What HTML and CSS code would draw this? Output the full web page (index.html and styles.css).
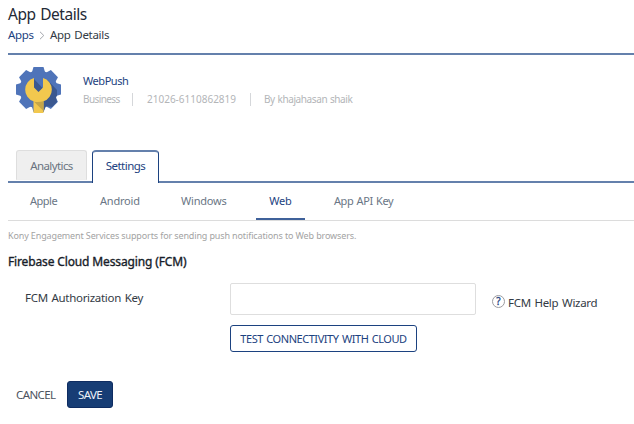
FILE: index.html
```html
<!DOCTYPE html>
<html lang="en">
<head>
<meta charset="utf-8">
<title>App Details</title>
<link rel="stylesheet" href="styles.css">
</head>
<body>
<header class="page-head">
  <h1>App Details</h1>
  <nav class="crumbs"><a class="crumb-link">Apps</a><svg class="chevron" viewBox="0 0 6 9"><path d="M1 .8 4.8 4.5 1 8.2"/></svg><span class="crumb-current">App Details</span></nav>
</header>
<section class="app">
  <svg class="app-icon" viewBox="0 0 45 46">
    <g fill="#4f74b9">
      <circle cx="22.500" cy="22.500" r="19"/>
      <path d="M17.500 0h10l1.500 5v35l-1.500 5h-10L16 40V5z"/>
      <path d="M17.500 0h10l1.500 5v35l-1.500 5h-10L16 40V5z" transform="rotate(45 22.500 22.500)"/>
      <path d="M17.500 0h10l1.500 5v35l-1.500 5h-10L16 40V5z" transform="rotate(90 22.500 22.500)"/>
      <path d="M17.500 0h10l1.500 5v35l-1.500 5h-10L16 40V5z" transform="rotate(135 22.500 22.500)"/>
    </g>
    <path fill="#3b5890" d="m18 12 9 9.500 4.500-8.500 9.500 10v6l-1 1 1 5-5 5-6-1-2.500 6-9.500-10z"/>
    <path fill="#f2c84e" d="M18 11v9.500l4.500 4.500 4.500-4.500V11a12.200 12.200 0 0 1 .5 23.300V46h-10V34.300A12.200 12.200 0 0 1 18 11z"/>
    <path fill="#c5a548" d="M18 34.700q4.500 1 9.500-.4V44z"/>
  </svg>
  <div class="app-info">
    <div class="app-name">WebPush</div>
    <div class="meta"><span class="meta-type">Business</span><span class="meta-id">21026-6110862819</span><span class="meta-owner">By khajahasan shaik</span></div>
  </div>
</section>
<nav class="tabs">
  <a class="tab tab-analytics"><span>Analytics</span></a>
  <a class="tab tab-active"><span>Settings</span></a>
</nav>
<nav class="subtabs">
  <a class="st-apple">Apple</a><a class="st-android">Android</a><a class="st-windows">Windows</a><a class="st-web">Web</a><a class="st-api">App API Key</a>
</nav>
<main>
  <p class="note">Kony Engagement Services supports for sending push notifications to Web browsers.</p>
  <h2>Firebase Cloud Messaging (FCM)</h2>
  <div class="form-row">
    <label class="key-label" for="key">FCM Authorization Key</label>
    <div class="field">
      <input id="key" type="text">
      <button class="test">TEST CONNECTIVITY WITH CLOUD</button>
    </div>
    <a class="help"><span class="help-mark">?</span><span class="help-text">FCM Help Wizard</span></a>
  </div>
  <div class="actions"><button class="cancel">CANCEL</button><button class="save">SAVE</button></div>
</main>
</body>
</html>
```
FILE: styles.css
```css
* { box-sizing: border-box; }
body {
  margin: 0;
  padding-left: 8px;
  height: 424px;
  overflow: hidden;
  background: #fff;
  color: #333b45;
  font: 11.5px/16px "Noto Sans", sans-serif;
  white-space: nowrap;
}
h1, h2, p { margin: 0; }
button, input { font: inherit; letter-spacing: inherit; word-spacing: inherit; padding: 0; margin: 0; }
.page-head { height: 55px; padding-top: 4px; border-bottom: 2px solid #6480ac; }
h1 { font-size: 15.5px; line-height: 21px; font-weight: 400; letter-spacing: -.45px; word-spacing: 1px; color: #242a36; }
.crumbs { display: flex; align-items: center; margin-top: 2px; letter-spacing: -.3px; word-spacing: 1px; }
.crumb-link { width: 31px; color: #1c4280; }
.chevron { width: 6px; height: 9px; margin-right: 5px; fill: none; stroke: #a2a5ab; stroke-width: 1; }
.app { display: flex; height: 95px; padding: 12px 0 0 8px; }
.app-icon { width: 45px; height: 46px; }
.app-info { margin-left: 22px; padding-top: 6px; }
.app-name { font-size: 11px; letter-spacing: -.45px; color: #1c4280; }
.meta { display: flex; align-items: center; margin-top: 4px; font-size: 10px; line-height: 13px; color: #b3b5b8; }
.meta-type { width: 49px; letter-spacing: -.6px; }
.meta-id { width: 118px; padding-left: 14px; border-left: 1px solid #d5d7da; }
.meta-owner { padding-left: 13px; border-left: 1px solid #d5d7da; letter-spacing: -.4px; word-spacing: .5px; }
.tabs { display: flex; height: 33px; padding-left: 8px; border-bottom: 2px solid #6480ac; font-size: 11.5px; letter-spacing: -.6px; }
.tab { text-align: center; }
.tab-analytics { width: 71px; height: 30px; padding-top: 7px; border: 1px solid #dedede; border-bottom-color: #eee; border-radius: 3px 3px 0 0; background: #efefef; color: #6a7380; }
.tab-active { width: 67px; height: 33px; margin-left: 5px; padding-top: 6px; border: 1px solid #1c4280; border-top: 2px solid #6480ac; border-bottom: 0; border-radius: 4px 4px 0 0; background: #fff; color: #1c4280; letter-spacing: -.55px; }
.subtabs { display: flex; height: 38px; border-bottom: 1px solid #dcdcdc; font-size: 11px; line-height: 16px; letter-spacing: -.2px; color: #6a7685; }
.subtabs a { padding-top: 10px; }
.st-apple { width: 70px; margin-left: 22px; }
.subtabs .st-apple { letter-spacing: -.5px; }
.subtabs .st-api { letter-spacing: -.45px; word-spacing: 1px; }
.st-android { width: 81px; }
.st-windows { width: 75px; }
.subtabs .st-web { width: 49px; margin-right: 29px; text-align: center; color: #1c4280; border-bottom: 2px solid #3f619a; }
.note { padding-top: 7px; font-size: 9px; letter-spacing: -.13px; color: #a3a3a3; }
h2 { margin-top: 9px; font-size: 12px; line-height: 17px; font-weight: 400; letter-spacing: -.14px; color: #171d29; -webkit-text-stroke: .35px #171d29; }
.form-row { display: flex; margin-top: 13px; }
.key-label { width: 222px; padding: 7px 0 0 17px; letter-spacing: -.3px; word-spacing: 1px; }
.field { display: flex; flex-direction: column; width: 246px; }
.field input { height: 32px; border: 1px solid #dedede; border-radius: 2px; background: #fff; }
.test { width: 187px; height: 27px; margin-top: 10px; border: 1px solid #1c4280; border-radius: 3px; background: #fff; color: #1c4280; font-size: 11px; letter-spacing: -.45px; word-spacing: 1px; }
.help { display: flex; align-items: flex-start; margin-left: 16px; padding-top: 12px; }
.help-mark { width: 13px; height: 13px; border: 1px solid #9b9b9f; border-radius: 50%; text-align: center; font-size: 10px; line-height: 11px; color: #1c4280; -webkit-text-stroke: .3px #1c4280; }
.help-text { margin-left: 3px; letter-spacing: -.3px; word-spacing: 1px; }
.actions { display: flex; align-items: center; margin-top: 29px; padding-left: 8px; font-size: 11.5px; letter-spacing: -.6px; }
.cancel { width: 51px; border: 0; background: none; text-align: left; color: #4c535e; }
.save { width: 46px; height: 27px; border: 1px solid #0e2c61; border-radius: 3px; background: #173d75; color: #eef2f8; }
```
